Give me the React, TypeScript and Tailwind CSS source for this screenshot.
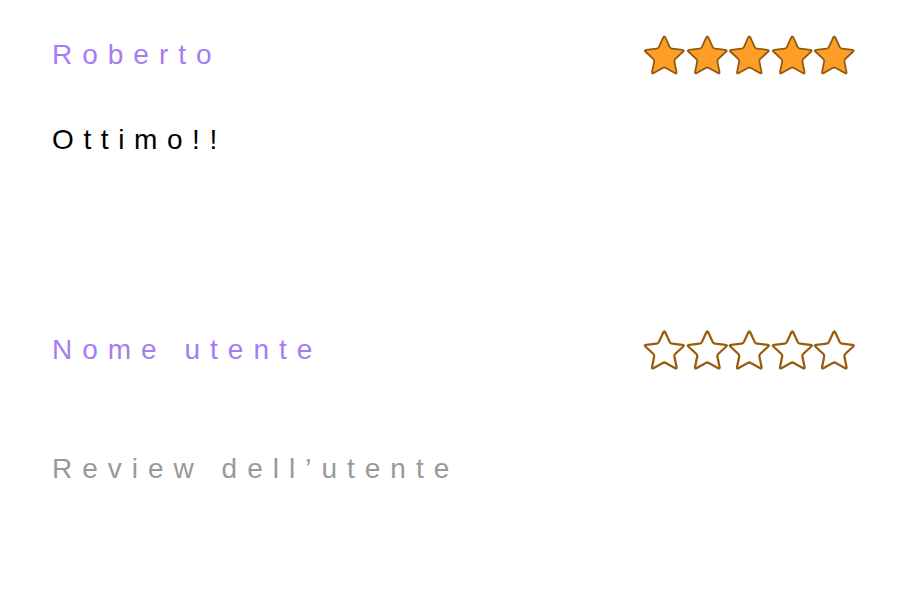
import React from 'react'

// rounded five point star, computed once
function starPath(cx: number, cy: number, R: number, r: number) {
    const pts: [number, number][] = []
    for (let i = 0; i < 10; i++) {
        const a = -Math.PI / 2 + (i * Math.PI) / 5
        const rad = i % 2 === 0 ? R : r
        pts.push([cx + rad * Math.cos(a), cy + rad * Math.sin(a)])
    }
    const lerp = (p: [number, number], q: [number, number], t: number) =>
        [p[0] + (q[0] - p[0]) * t, p[1] + (q[1] - p[1]) * t].map(n => n.toFixed(2)).join(' ')
    let d = ''
    for (let i = 0; i < 10; i++) {
        const p = pts[i]
        const prev = pts[(i + 9) % 10]
        const next = pts[(i + 1) % 10]
        const t = i % 2 === 0 ? 0.17 : 0.12
        const start = lerp(p, prev, t)
        const end = lerp(p, next, t)
        d += (i === 0 ? 'M' : 'L') + start + ' Q' + p[0].toFixed(2) + ' ' + p[1].toFixed(2) + ' ' + end + ' '
    }
    return d + 'Z'
}

const STAR = starPath(21.5, 22.8, 21.8, 10.4)

function Star({ filled }: { filled: boolean }) {
    return (
        <svg width="42.6" height="42" viewBox="0 0 43 42">
            <path
                d={STAR}
                fill={filled ? '#fe9e26' : '#ffffff'}
                stroke={filled ? '#8e5a10' : '#9a5c0c'}
                strokeWidth={filled ? 1.8 : 2.3}
                strokeLinejoin="round"
            />
        </svg>
    )
}

function Stars({ value }: { value: number }) {
    return (
        <div className="flex">
            {[0, 1, 2, 3, 4].map(i => (
                <Star key={i} filled={i < value} />
            ))}
        </div>
    )
}

export default function App() {
    const font = { fontFamily: '"Liberation Sans", Arial, sans-serif' }
    return (
        <div className="w-[900px] h-[600px] bg-white pl-[52px] pr-[44px] pt-[34px]" style={font}>
            <div className="flex h-[42px] items-center justify-between">
                <span className="text-[28px] leading-none tracking-[10px] text-[#a67cf4]">Roberto</span>
                <Stars value={5} />
            </div>
            <p className="mt-[50px] text-[28px] leading-none tracking-[9.6px] text-black">Ottimo!!</p>

            <div className="mt-[175px] flex h-[42px] items-center justify-between">
                <span className="text-[28px] leading-none tracking-[10px] text-[#a67cf4]">Nome utente</span>
                <Stars value={0} />
            </div>
            <p className="mt-[84px] text-[28px] leading-none tracking-[10px] text-[#999999]">Review dell’utente</p>
        </div>
    )
}
